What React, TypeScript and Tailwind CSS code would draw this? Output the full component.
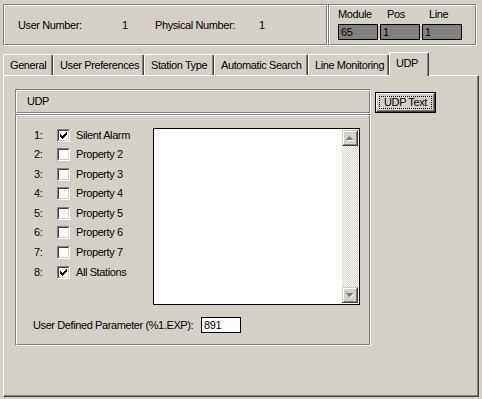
import React from 'react'

const face = 'bg-[#d4d0c8]'

function Etched({ className = '', children }: { className?: string; children?: React.ReactNode }) {
  return (
    <div className={`border border-t-[#808080] border-l-[#808080] border-r-white border-b-white ${className}`}>
      <div className="h-full w-full border border-t-white border-l-white border-r-[#808080] border-b-[#808080]">
        {children}
      </div>
    </div>
  )
}

function Check() {
  return (
    <svg width="7" height="7" viewBox="0 0 7 7" shapeRendering="crispEdges">
      <path d="M0 2h1v1h1v1h1V3h1V2h1V1h1V0h1v3H6v1H5v1H4v1H3v1H2V6H1V5H0z" fill="#000" />
    </svg>
  )
}

function CheckBox({ checked }: { checked?: boolean }) {
  return (
    <div className="w-[13px] h-[13px] border border-t-[#808080] border-l-[#808080] border-r-white border-b-white shrink-0">
      <div className="w-full h-full border border-t-[#404040] border-l-[#404040] border-r-[#d4d0c8] border-b-[#d4d0c8] bg-white flex items-center justify-center">
        {checked && <Check />}
      </div>
    </div>
  )
}

function ScrollBtn({ up }: { up?: boolean }) {
  return (
    <div className="w-[16px] h-[16px] border border-t-[#d4d0c8] border-l-[#d4d0c8] border-r-[#404040] border-b-[#404040] shrink-0">
      <div className={`w-full h-full ${face} border border-t-white border-l-white border-r-[#808080] border-b-[#808080] flex items-center justify-center`}>
        <svg width="8" height="5" viewBox="0 0 8 5" shapeRendering="crispEdges">
          {up ? (
            <>
              <path d="M1 4h7v1H1z" fill="#fff" />
              <path d="M3 0h1v1h1v1h1v1h1v1H0V3h1V2h1V1h1z" fill="#808080" />
            </>
          ) : (
            <>
              <path d="M4 4h1V3h1V2h1V1h1v1H7v1H6v1H5v1H4z" fill="#fff" />
              <path d="M0 0h7v1H6v1H5v1H4v1H3V3H2V2H1V1H0z" fill="#808080" />
            </>
          )}
        </svg>
      </div>
    </div>
  )
}

const tabs = [
  { label: 'General', w: 'w-[50px]' },
  { label: 'User Preferences', w: 'w-[91px]' },
  { label: 'Station Type', w: 'w-[70px]' },
  { label: 'Automatic Search', w: 'w-[94px]' },
  { label: 'Line Monitoring', w: 'w-[81px]' },
]

const props = [
  { n: '1:', label: 'Silent Alarm', checked: true, h: 'h-[20px]' },
  { n: '2:', label: 'Property 2', h: 'h-[19px]' },
  { n: '3:', label: 'Property 3', h: 'h-[20px]' },
  { n: '4:', label: 'Property 4', h: 'h-[19px]' },
  { n: '5:', label: 'Property 5', h: 'h-[20px]' },
  { n: '6:', label: 'Property 6', h: 'h-[19px]' },
  { n: '7:', label: 'Property 7', h: 'h-[20px]' },
  { n: '8:', label: 'All Stations', checked: true, h: 'h-[20px]' },
]

export default function App() {
  return (
    <div className={`w-[482px] h-[399px] ${face} overflow-hidden text-[11px] tracking-[-0.4px] text-black font-['Liberation_Sans',Arial,sans-serif] leading-none`}>
      {/* header */}
      <div className="flex pt-[4px] pl-[3px]">
        <Etched className="w-[325px] h-[42px]">
          <div className="flex items-center h-full pl-[13px] pt-[1px]">
            <span className="w-[104px]">User Number:</span>
            <span className="w-[33px]">1</span>
            <span className="w-[104px]">Physical Number:</span>
            <span>1</span>
          </div>
        </Etched>
        <Etched className="w-[149px] h-[42px]">
          <div className="flex gap-[2px] pl-[8px]">
            {[
              { l: 'Module', v: '65', pl: 'pl-0' },
              { l: 'Pos', v: '1', pl: 'pl-[7px]' },
              { l: 'Line', v: '1', pl: 'pl-[7px]' },
            ].map(f => (
              <div key={f.l} className="w-[40px]">
                <div className={`h-[16px] flex items-center ${f.pl}`}>{f.l}</div>
                <div className="mt-[2px] h-[16px] border border-black bg-[#808080] flex items-center pl-[2px]">{f.v}</div>
              </div>
            ))}
          </div>
        </Etched>
      </div>

      {/* tabs */}
      <div className="flex items-end h-[23px] mt-[6px] pl-[3px]">
        {tabs.map(t => (
          <div
            key={t.label}
            className={`${t.w} h-[21px] shrink-0 rounded-t-[2px] border-t border-l border-white border-r border-r-[#404040] shadow-[inset_-1px_0_0_#808080] flex items-center pl-[6px] whitespace-nowrap`}
          >
            {t.label}
          </div>
        ))}
        <div className={`relative top-[1px] z-10 w-[40px] h-[24px] shrink-0 ${face} rounded-t-[2px] border-t border-l border-white border-r border-r-[#404040] shadow-[inset_-1px_0_0_#808080] flex items-start pt-[5px] pl-[6px]`}>
          UDP
        </div>
      </div>

      {/* tab panel */}
      <div className="ml-[3px] w-[476px] h-[322px] border-t border-l border-white border-r border-b border-r-[#404040] border-b-[#404040] shadow-[inset_-1px_-1px_0_#808080]">
        <div className="flex pl-[11px] pt-[13px]">
          <div className="w-[356px]">
            <Etched className="h-[25px]">
              <div className="h-full flex items-center pl-[10px]">UDP</div>
            </Etched>
            <Etched className="h-[232px]">
              <div className="pl-[16px] pt-[9px]">
                <div className="flex">
                  <div className="w-[120px]">
                    {props.map(p => (
                      <div key={p.n} className={`${p.h} flex items-center`}>
                        <span className="w-[24px] pl-[1px]">{p.n}</span>
                        <CheckBox checked={p.checked} />
                        <span className="ml-[6px] whitespace-nowrap">{p.label}</span>
                      </div>
                    ))}
                  </div>
                  <div className="mt-[3px] w-[207px] h-[177px] border border-black bg-white flex justify-end pr-[1px] py-[1px]">
                    <div className="w-[16px] flex flex-col">
                      <ScrollBtn up />
                      <div className="flex-1 bg-[repeating-conic-gradient(#d4d0c8_0_25%,#ffffff_0_50%)] bg-[length:2px_2px]" />
                      <ScrollBtn />
                    </div>
                  </div>
                </div>
                <div className="flex items-center mt-[12px]">
                  <span className="w-[168px] whitespace-nowrap">User Defined Parameter (%1.EXP):</span>
                  <div className="w-[40px] h-[16px] border border-black bg-white flex items-center pl-[2px]">891</div>
                </div>
              </div>
            </Etched>
          </div>
          <div className="ml-[4px] mt-[3px] w-[61px] h-[21px] border border-black">
            <div className="w-full h-full border border-t-white border-l-white border-r-[#404040] border-b-[#404040] shadow-[inset_-1px_-1px_0_#808080] p-[2px]">
              <div className="w-full h-full border border-dotted border-black flex items-center justify-center">UDP Text</div>
            </div>
          </div>
        </div>
      </div>
    </div>
  )
}
